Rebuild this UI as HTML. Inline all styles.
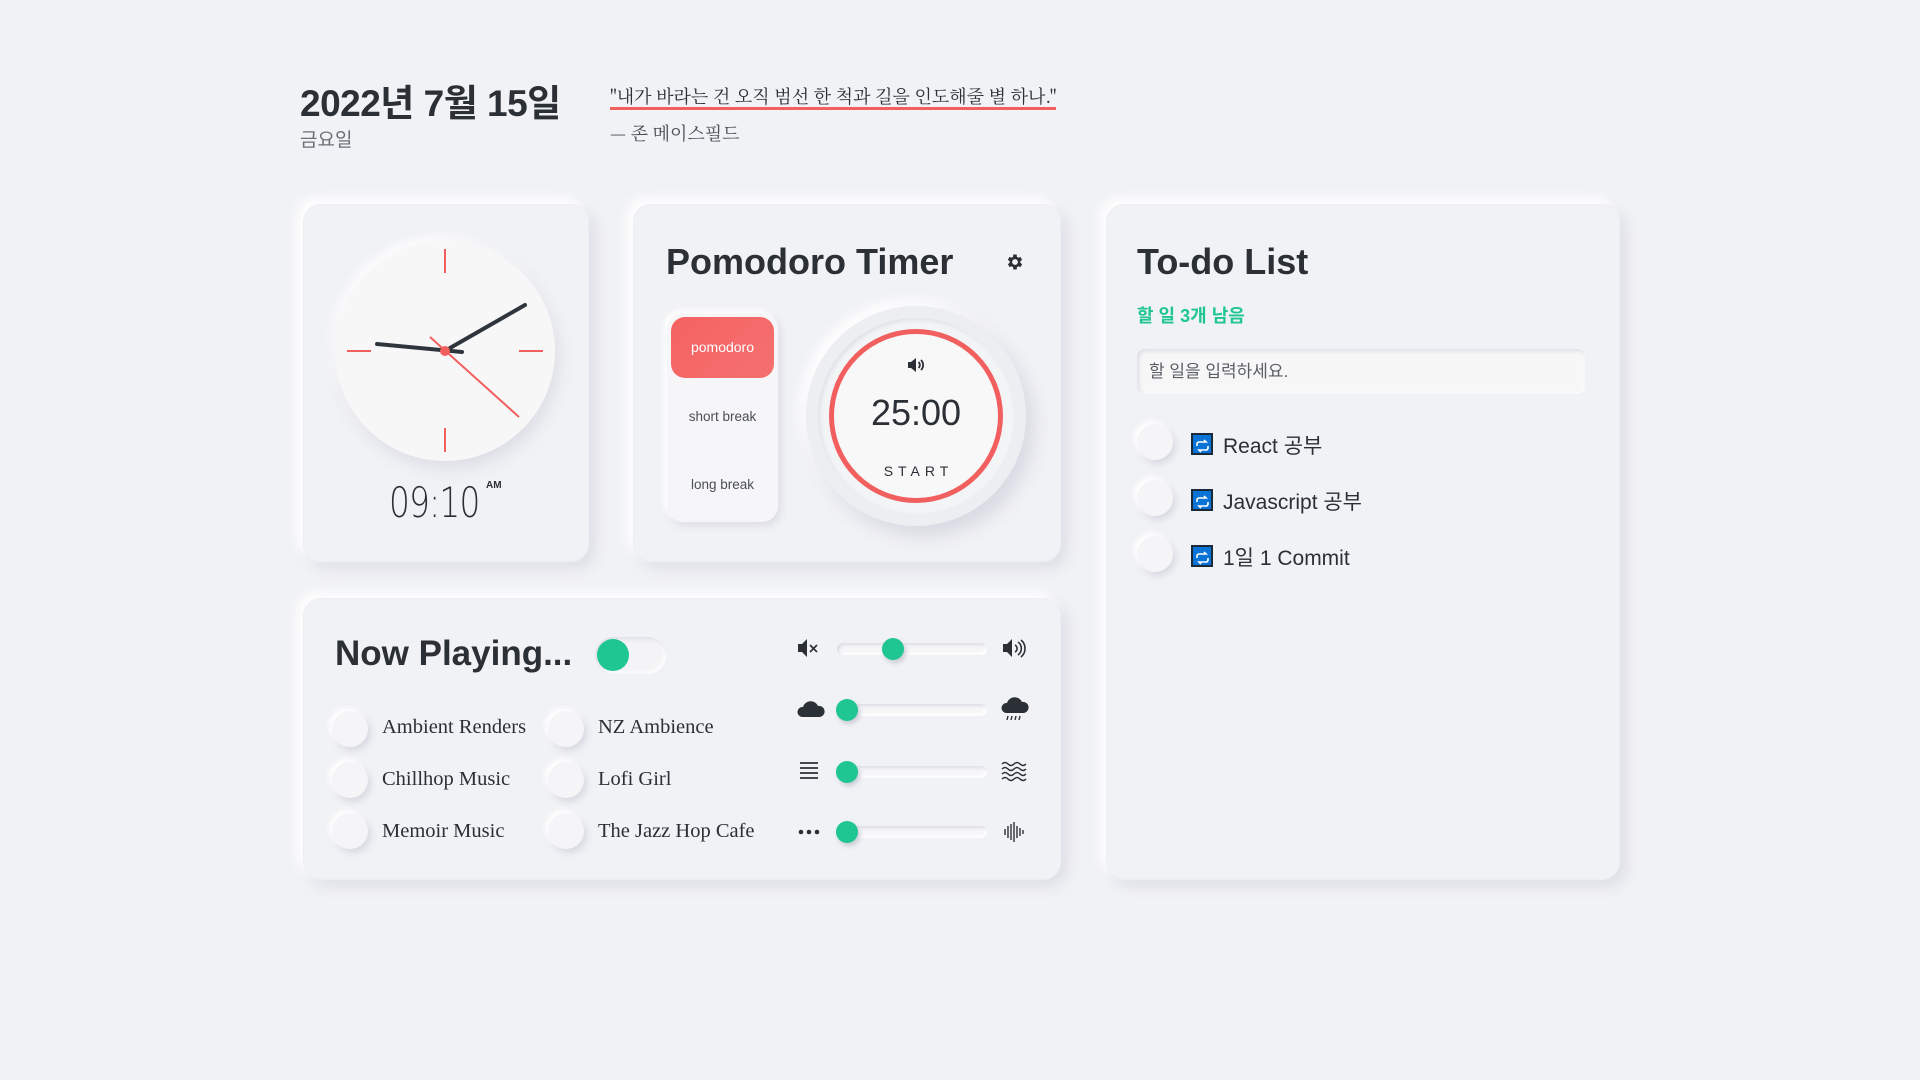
<!DOCTYPE html>
<html><head><meta charset="utf-8"><style>
*{margin:0;padding:0;box-sizing:border-box}
body{width:1920px;height:1080px;background:#f1f2f5;font-family:"Liberation Sans","Noto Sans CJK KR",sans-serif;color:#2b2f36;position:relative;overflow:hidden}
.a{position:absolute}
.card{position:absolute;background:#f1f2f5;border-radius:18px;box-shadow:-6px -6px 12px #ffffff,6px 6px 14px #dcdde6;border:1px solid #eceef2}
.rad{position:absolute;width:36px;height:36px;border-radius:50%;background:#f5f5f7;box-shadow:-3px -3px 6px #fff,3px 4px 7px #d8d9e2}
.lab{position:absolute;font-family:"Liberation Serif",serif;font-size:20.5px;color:#2b2f36}
.track{position:absolute;left:837px;width:150px;height:12px;border-radius:6px;background:#f6f6f8;box-shadow:inset 2px 2px 3px #dcdde5,inset -2px -2px 3px #fff}
.thumb{position:absolute;width:22px;height:22px;border-radius:50%;background:#1fc691;box-shadow:2px 3px 5px #c9cbd6}
.todo{position:absolute;font-size:21px;color:#2b2f36}
.ic{position:absolute;width:22px;height:22px;background:#0a74d6;border:2px solid #1b2a3a}
</style></head><body>

<div class="a" style="left:300px;top:73px;font-size:37px;font-weight:bold;letter-spacing:-0.5px">2022년 7월 15일</div>
<div class="a" style="left:300px;top:125px;font-size:19px;color:#6b6f76">금요일</div>
<div class="a" style="left:610px;top:83px;font-size:18px;color:#2b2f36;font-family:'Noto Serif CJK SC',serif">"내가 바라는 건 오직 범선 한 척과 길을 인도해줄 별 하나."</div>
<div class="a" style="left:610px;top:107px;width:446px;height:3px;background:#f25f5f"></div>
<div class="a" style="left:610px;top:120px;font-size:18px;color:#4a4e55;font-family:'Noto Serif CJK SC',serif">— 존 메이스필드</div>

<!-- clock card -->
<div class="card" style="left:303px;top:204px;width:286px;height:358px"></div>
<div class="a" style="left:335px;top:241px;width:220px;height:220px;border-radius:50%;background:#f7f7f8;box-shadow:4px 8px 16px #dddee6,-4px -4px 10px #fff"></div>
<svg class="a" style="left:0;top:0" width="1920" height="1080">
<g stroke="#f25f5f" stroke-width="2"><line x1="445" y1="249" x2="445" y2="273"/><line x1="445" y1="428" x2="445" y2="452"/><line x1="347" y1="351" x2="371" y2="351"/><line x1="519" y1="351" x2="543" y2="351"/></g>
<g stroke="#2f353c" stroke-width="4" stroke-linecap="round"><line x1="377" y1="344" x2="462" y2="352"/><line x1="450" y1="348" x2="525" y2="305"/></g>
<line x1="430" y1="337" x2="519" y2="417" stroke="#f25f5f" stroke-width="2"/>
<circle cx="445" cy="351" r="5" fill="#f25f5f"/>
</svg>
<div class="a" style="left:389px;top:478px;font-size:42px;color:#2b2f36;font-family:'DejaVu Sans',sans-serif;font-weight:200;transform:scaleX(0.78);transform-origin:0 0;letter-spacing:-1px">09:10</div>
<div class="a" style="left:486px;top:480px;font-size:10px;font-weight:bold">AM</div>

<!-- pomodoro card -->
<div class="card" style="left:633px;top:204px;width:428px;height:358px"></div>
<div class="a" style="left:666px;top:241px;font-size:36px;font-weight:bold">Pomodoro Timer</div>
<svg class="a" style="left:1005px;top:252px" width="20" height="20" viewBox="0 0 24 24"><path fill="#2b2f36" d="M19.4 13a7.5 7.5 0 0 0 0-2l2.1-1.6-2-3.5-2.5 1a7 7 0 0 0-1.7-1L15 3h-4l-.4 2.9a7 7 0 0 0-1.7 1l-2.5-1-2 3.5L6.6 11a7.5 7.5 0 0 0 0 2l-2.1 1.6 2 3.5 2.5-1a7 7 0 0 0 1.7 1L11 21h4l.4-2.9a7 7 0 0 0 1.7-1l2.5 1 2-3.5zM13 15.5a3.5 3.5 0 1 1 0-7 3.5 3.5 0 0 1 0 7z" transform="translate(-1 0)"/></svg>
<div class="a" style="left:667px;top:313px;width:111px;height:209px;border-radius:16px;background:#f6f6f8;box-shadow:-3px -3px 6px #fff,3px 4px 8px #dcdde5"></div>
<div class="a" style="left:671px;top:317px;width:103px;height:61px;border-radius:14px;background:linear-gradient(135deg,#f56262,#f57070);color:#fff;font-size:14px;text-align:center;line-height:61px">pomodoro</div>
<div class="a" style="left:667px;top:409px;width:111px;text-align:center;font-size:13.5px;color:#4a4e55">short break</div>
<div class="a" style="left:667px;top:477px;width:111px;text-align:center;font-size:13.5px;color:#4a4e55">long break</div>
<div class="a" style="left:806px;top:306px;width:220px;height:220px;border-radius:50%;background:#eceef2;box-shadow:8px 10px 18px #d8d9e2,-6px -6px 12px #fff"></div>
<div class="a" style="left:818px;top:318px;width:196px;height:196px;border-radius:50%;background:#f3f4f6;box-shadow:inset 2px 2px 4px #dfe0e6"></div>
<div class="a" style="left:829px;top:329px;width:174px;height:174px;border-radius:50%;background:#f8f8f9;border:5px solid #f25f5f"></div>
<svg class="a" style="left:906px;top:357px" width="20" height="16" viewBox="0 0 20 16"><path fill="#2b2f36" d="M2 5h3l5-4v14l-5-4H2z"/><path d="M12.5 5a4 4 0 0 1 0 6M15 3a7 7 0 0 1 0 10" stroke="#2b2f36" stroke-width="1.8" fill="none"/></svg>
<div class="a" style="left:806px;top:392px;width:220px;text-align:center;font-size:36px;color:#2b2f36">25:00</div>
<div class="a" style="left:806px;top:463px;width:220px;text-align:center;font-size:14px;letter-spacing:5px;padding-left:5px">START</div>

<!-- now playing -->
<div class="card" style="left:303px;top:598px;width:758px;height:282px"></div>
<div class="a" style="left:335px;top:634px;font-size:35px;font-weight:bold">Now Playing...</div>
<div class="a" style="left:595px;top:637px;width:71px;height:37px;border-radius:19px;background:#f4f4f6;box-shadow:inset 2px 2px 4px #dcdde5,inset -2px -2px 4px #fff"></div>
<div class="a" style="left:597px;top:639px;width:32px;height:32px;border-radius:50%;background:#1fc691"></div>
<div class="rad" style="left:332px;top:711px"></div><div class="lab" style="left:382px;top:716px">Ambient Renders</div>
<div class="rad" style="left:332px;top:762px"></div><div class="lab" style="left:382px;top:768px">Chillhop Music</div>
<div class="rad" style="left:332px;top:813px"></div><div class="lab" style="left:382px;top:820px">Memoir Music</div>
<div class="rad" style="left:548px;top:711px"></div><div class="lab" style="left:598px;top:716px">NZ Ambience</div>
<div class="rad" style="left:548px;top:762px"></div><div class="lab" style="left:598px;top:768px">Lofi Girl</div>
<div class="rad" style="left:548px;top:813px"></div><div class="lab" style="left:598px;top:820px">The Jazz Hop Cafe</div>

<div class="track" style="top:643px"></div><div class="thumb" style="left:882px;top:638px"></div>
<div class="track" style="top:704px"></div><div class="thumb" style="left:836px;top:699px"></div>
<div class="track" style="top:766px"></div><div class="thumb" style="left:836px;top:761px"></div>
<div class="track" style="top:826px"></div><div class="thumb" style="left:836px;top:821px"></div>
<svg class="a" style="left:0;top:0" width="1920" height="1080">
<path fill="#2b2f36" d="M798 644h4l5-5v18l-5-5h-4z"/><path d="M810 645l7 7M817 645l-7 7" stroke="#2b2f36" stroke-width="1.6"/>
<path fill="#2b2f36" d="M1003 644h4l5-5v18l-5-5h-4z"/><path d="M1015 645a4 4 0 0 1 0 7M1018 642a8 8 0 0 1 0 13M1021 640a11 11 0 0 1 0 17" stroke="#2b2f36" stroke-width="1.6" fill="none"/>
<path fill="#2b2f36" d="M802 717a5 5 0 0 1 1-10 8 8 0 0 1 15-1 5.5 5.5 0 0 1 2 11z"/>
<path fill="#2b2f36" d="M1006 713a5 5 0 0 1 1-10 8 8 0 0 1 15-1 5.5 5.5 0 0 1 2 11z"/><path d="M1008 716l-1 4M1012 716l-1 4M1016 716l-1 4M1020 716l-1 4" stroke="#2b2f36" stroke-width="1.4"/>
<g stroke="#2b2f36" stroke-width="1.8"><line x1="800" y1="763" x2="818" y2="763"/><line x1="800" y1="768" x2="818" y2="768"/><line x1="800" y1="773" x2="818" y2="773"/><line x1="800" y1="778" x2="818" y2="778"/></g>
<g stroke="#2b2f36" stroke-width="1.5" fill="none"><path d="M1002 764q3-3 6 0t6 0t6 0t6 0"/><path d="M1002 769q3-3 6 0t6 0t6 0t6 0"/><path d="M1002 774q3-3 6 0t6 0t6 0t6 0"/><path d="M1002 779q3-3 6 0t6 0t6 0t6 0"/></g>
<g fill="#2b2f36"><circle cx="801" cy="832" r="2.3"/><circle cx="809" cy="832" r="2.3"/><circle cx="817" cy="832" r="2.3"/></g>
<g stroke="#2b2f36" stroke-width="1.4"><line x1="1005" y1="829" x2="1005" y2="835"/><line x1="1008" y1="826" x2="1008" y2="838"/><line x1="1011" y1="824" x2="1011" y2="840"/><line x1="1014" y1="822" x2="1014" y2="842"/><line x1="1017" y1="826" x2="1017" y2="838"/><line x1="1020" y1="828" x2="1020" y2="836"/><line x1="1023" y1="830" x2="1023" y2="834"/></g>
</svg>

<!-- todo -->
<div class="card" style="left:1106px;top:204px;width:514px;height:676px"></div>
<div class="a" style="left:1137px;top:241px;font-size:36px;font-weight:bold">To-do List</div>
<div class="a" style="left:1137px;top:302px;font-size:18px;font-weight:bold;color:#1fc691">할 일 3개 남음</div>
<div class="a" style="left:1137px;top:349px;width:448px;height:45px;border-radius:8px;background:#f7f7f8;box-shadow:inset 2px 2px 4px #dcdde5,inset -1px -1px 2px #fff;padding-left:12px;line-height:45px;font-size:17px;color:#5a5e65">할 일을 입력하세요.</div>
<div class="rad" style="left:1137px;top:424px"></div>
<div class="rad" style="left:1137px;top:480px"></div>
<div class="rad" style="left:1137px;top:536px"></div>
<div class="ic" style="left:1191px;top:433px"></div><div class="todo" style="left:1223px;top:430px">React 공부</div>
<div class="ic" style="left:1191px;top:489px"></div><div class="todo" style="left:1223px;top:486px">Javascript 공부</div>
<div class="ic" style="left:1191px;top:545px"></div><div class="todo" style="left:1223px;top:542px">1일 1 Commit</div>
<svg class="a" style="left:0;top:0" width="1920" height="1080">
<g stroke="#fff" stroke-width="1.6" fill="none">
<path d="M1197 446v-2a2 2 0 0 1 2-2h7l-2-2M1208 446v2a2 2 0 0 1-2 2h-7l2 2"/>
<path d="M1197 502v-2a2 2 0 0 1 2-2h7l-2-2M1208 502v2a2 2 0 0 1-2 2h-7l2 2"/>
<path d="M1197 558v-2a2 2 0 0 1 2-2h7l-2-2M1208 558v2a2 2 0 0 1-2 2h-7l2 2"/>
</g></svg>
</body></html>
